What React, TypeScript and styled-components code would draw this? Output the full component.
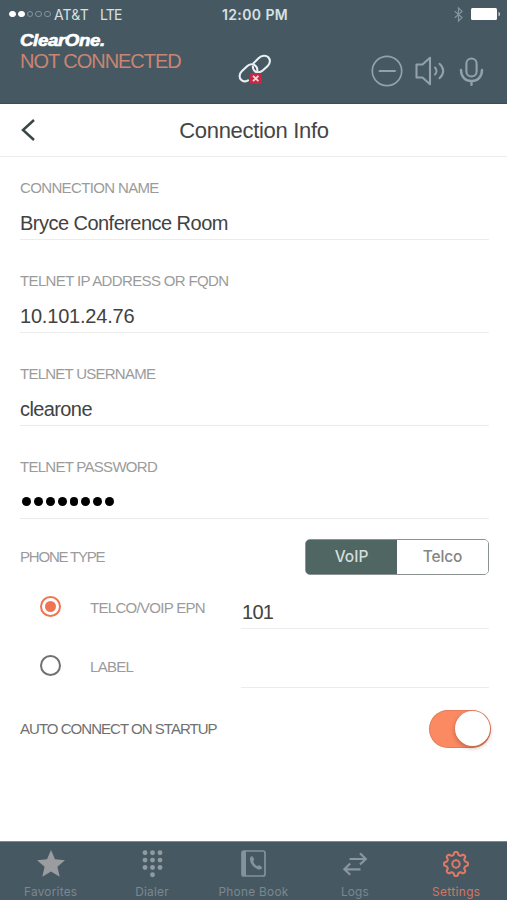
import React, { useState } from 'react';
import styled, { createGlobalStyle } from 'styled-components';

const slate = '#465962';
const coral = '#ef7552';
const muted = '#93a1a8';

const GlobalStyle = createGlobalStyle`
  * { box-sizing: border-box; }
  body { margin: 0; background: #fff; font-family: "Liberation Sans", Arial, sans-serif; }
  button { font: inherit; border: 0; padding: 0; background: none; }
  svg { display: block; overflow: visible; }
`;

const Screen = styled.div`
  width: 507px;
  height: 900px;
  display: flex;
  flex-direction: column;
  background: #fff;
  overflow: hidden;
`;

const Header = styled.header`
  height: 104px;
  flex: none;
  background: ${slate};
  border-bottom: 1px solid #3d4d57;
`;

const StatusBar = styled.div`
  display: grid;
  grid-template-columns: 1fr auto 1fr;
  align-items: center;
  height: 28px;
  padding: 0 6px 0 9px;
  font-family: Inter, sans-serif;
  color: #d9e0e3;
  white-space: pre;
`;

const Carrier = styled.div`
  display: flex;
  align-items: center;
  font-size: 14px;
  letter-spacing: 0.15px;
`;

const Signal = styled.div`
  display: flex;
  gap: 2px;
  margin-right: 3px;
`;

const SignalDot = styled.i<{ $on: boolean }>`
  width: 6.8px;
  height: 6.8px;
  border-radius: 50%;
  border: 1px solid ${p => (p.$on ? '#fff' : '#82939b')};
  background: ${p => (p.$on ? '#fff' : 'transparent')};
`;

const Network = styled.span`
  margin-left: 11px;
  letter-spacing: -0.8px;
`;

const Clock = styled.div`
  font-size: 14px;
  font-weight: 600;
  letter-spacing: 0.4px;
  padding-left: 0;
`;

const StatusIcons = styled.div`
  display: flex;
  justify-content: flex-end;
  align-items: center;
  gap: 7px;
`;

const HeaderMain = styled.div`
  display: grid;
  grid-template-columns: 218px 180px 1fr;
  padding: 4px 0 0 20px;
`;

const Brand = styled.div`
  font-size: 16px;
  font-weight: 700;
  font-style: italic;
  line-height: 18px;
  letter-spacing: -0.35px;
  color: #fff;
  -webkit-text-stroke: 0.6px #fff;
  transform: scaleX(1.17);
  transform-origin: left;
`;

const ConnectionState = styled.div`
  font-size: 20px;
  line-height: 22px;
  letter-spacing: -1.03px;
  color: #cb8471;
  white-space: nowrap;
`;

const LinkStatus = styled.div`
  padding: 22px 0 0 0;
`;

const AudioControls = styled.div`
  display: flex;
  align-items: center;
  gap: 12px;
  height: 34px;
  margin: 22px 0 0 -47px;
`;

const TitleBar = styled.div`
  display: grid;
  grid-template-columns: 60px 1fr 60px;
  align-items: center;
  height: 53px;
  flex: none;
  border-bottom: 1px solid #ececec;
`;

const BackButton = styled.button`
  padding-left: 21px;
`;

const Title = styled.h1`
  margin: 1px 0 0 1px;
  text-align: center;
  font-size: 22px;
  font-weight: 400;
  letter-spacing: -0.3px;
  color: #454545;
`;

const Form = styled.main`
  flex: 1;
  padding: 21px 18px 0 20px;
`;

const Fields = styled.div`
  display: flex;
  flex-direction: column;
  gap: 31px;
`;

const Field = styled.div`
  display: flex;
  flex-direction: column;
  gap: 9px;
  border-bottom: 1px solid #ececec;
`;

const Label = styled.span<{ $spacing?: number; $dark?: boolean }>`
  font-size: 15px;
  line-height: 20px;
  letter-spacing: ${p => p.$spacing ?? -0.9}px;
  color: ${p => (p.$dark ? '#707070' : '#9b9b9b')};
  white-space: nowrap;
`;

const Value = styled.span<{ $spacing?: number }>`
  display: flex;
  align-items: center;
  height: 32px;
  font-size: 20px;
  letter-spacing: ${p => p.$spacing ?? -0.55}px;
  color: #424242;
`;

const PasswordDots = styled.span`
  display: flex;
  gap: 3px;
  padding: 0 0 1px 2px;
`;

const PasswordDot = styled.i`
  width: 8.9px;
  height: 8.9px;
  border-radius: 50%;
  background: #000;
`;

const PhoneType = styled.div`
  display: flex;
  justify-content: space-between;
  align-items: center;
  height: 35px;
  margin-top: 20px;
`;

const Segmented = styled.div`
  display: flex;
  width: 184px;
  height: 36px;
  border: 1.5px solid #8b9291;
  border-radius: 5px;
  overflow: hidden;
`;

const Segment = styled.button<{ $active: boolean }>`
  flex: 1;
  font-family: Inter, sans-serif;
  font-size: 15.5px;
  font-weight: 500;
  letter-spacing: ${p => (p.$active ? 0 : -0.15)}px;
  color: ${p => (p.$active ? '#d3dedc' : '#858585')};
  background: ${p => (p.$active ? '#506663' : '#fff')};
  box-shadow: ${p => (p.$active ? '0 0 0 1.5px #506663' : 'none')};
`;

const OptionRow = styled.div<{ $height: number }>`
  display: grid;
  grid-template-columns: 70px 151px 1fr;
  align-items: end;
  height: ${p => p.$height}px;
`;

const Radio = styled.button<{ $on: boolean }>`
  display: flex;
  align-items: center;
  justify-content: center;
  width: 21px;
  height: 21px;
  margin: 0 0 12px 20px;
  border: 2px solid ${p => (p.$on ? coral : '#707070')};
  border-radius: 50%;
  &::after {
    content: "";
    width: 11px;
    height: 11px;
    border-radius: 50%;
    background: ${p => (p.$on ? coral : 'transparent')};
  }
`;

const OptionLabel = styled(Label)`
  margin-bottom: 11px;
`;

const OptionValue = styled(Value)`
  height: 33px;
  padding-left: 1px;
  border-bottom: 1px solid #ececec;
`;

const AutoConnect = styled.div`
  display: flex;
  align-items: center;
  justify-content: space-between;
  height: 39px;
  margin: 21px -2px 0 0;
`;

const Toggle = styled.button<{ $on: boolean }>`
  display: flex;
  justify-content: ${p => (p.$on ? 'flex-end' : 'flex-start')};
  width: 62px;
  height: 38px;
  padding: 1.5px;
  border-radius: 19px;
  background: ${p => (p.$on ? '#fb8962' : '#ddd')};
  box-shadow: inset 0 0 0 1px rgba(190, 110, 90, 0.4);
`;

const Knob = styled.i`
  width: 35px;
  height: 35px;
  border-radius: 50%;
  background: #fff;
  box-shadow: 0 2px 4px rgba(80, 30, 10, 0.35);
`;

const TabBar = styled.nav`
  display: grid;
  grid-template-columns: repeat(5, 1fr);
  height: 59px;
  flex: none;
  background: ${slate};
  border-top: 1px solid #7d878c;
`;

const Tab = styled.button<{ $active: boolean }>`
  display: flex;
  flex-direction: column;
  align-items: center;
  font-family: Inter, sans-serif;
  font-size: 11.8px;
  color: ${p => (p.$active ? '#d67562' : '#7c878f')};
`;

const TabIcon = styled.span`
  display: flex;
  align-items: center;
  height: 43px;
  color: inherit;
`;

const TabText = styled.span<{ $spacing: number }>`
  line-height: 14px;
  letter-spacing: ${p => p.$spacing}px;
  white-space: nowrap;
`;

const Bluetooth = () => (
  <svg width="9" height="15" viewBox="0 0 9 15" fill="none" stroke="#86959c" strokeWidth="1.2">
    <path d="M.8 4.2 8 10.6 4.5 14V1L8 4.4.8 10.8" />
  </svg>
);

const Battery = () => (
  <svg width="31" height="13" viewBox="0 0 31 13">
    <rect x="1" y="0" width="26" height="12" rx="1.5" fill="#fff" />
    <path d="M28.5 3.7c2 .8 2 3.8 0 4.6z" fill="#cbd3d7" />
  </svg>
);

const BrokenLink = () => (
  <svg width="34" height="32" viewBox="0 0 34 32" fill="none">
    <g stroke="#e8f0f3" strokeWidth="2.1" strokeLinecap="round" strokeLinejoin="round">
      <path d="M15.500 9.300 20.800 4.100c3-3 7.300-3 9.500-.8s2.100 6-.6 8.600l-5 4.700c-2.600 2.400-6.300 2.300-8.300.2-1.200-1.300-1.600-2.700-1.500-4.300" />
      <path d="M19.300 16.900c.3-2-.4-4-2-5.300-2.200-1.900-5.800-1.700-8.200.6l-5.300 5.100c-2.700 2.700-2.800 6.400-.7 8.500 1.800 1.800 4.600 1.900 6.900.5" />
    </g>
    <rect x="12" y="19" width="11.500" height="11" rx="1.5" fill="#c92844" />
    <path d="m15 21.800 5.400 5.400m0-5.400-5.400 5.400" stroke="#f5d8de" strokeWidth="1.8" />
  </svg>
);

const MinusCircle = () => (
  <svg width="32" height="32" viewBox="0 0 32 32" fill="none" stroke={muted} strokeWidth="1.7" strokeLinecap="round">
    <circle cx="16" cy="16" r="14.7" />
    <path d="M8.500 16h15.500" strokeWidth="2" />
  </svg>
);

const Speaker = () => (
  <svg width="32" height="30" viewBox="0 0 32 30" fill="none" stroke={muted} strokeWidth="2.1" strokeLinejoin="round" strokeLinecap="round">
    <path d="M1.500 8.500h6L15 1.800v26.400l-7.500-6.700h-6z" />
    <path d="M20 11.500c1.900 2 1.900 5 0 7M24.500 7.800c4.900 4.100 4.900 10.300 0 14.400" />
  </svg>
);

const Microphone = () => (
  <svg width="25" height="29" viewBox="0 0 24 29" fill="none" stroke={muted} strokeWidth="2.1" strokeLinecap="round">
    <rect x="6.900" y="1.500" width="10.200" height="18" rx="5.100" />
    <path d="M1.500 13c0 6.800 4.300 11 10.500 11s10.500-4.200 10.500-11M12 24v3.800" strokeWidth="2.400" />
  </svg>
);

const Star = () => (
  <svg width="28" height="27" viewBox="0 0 28 27" fill="#9a9ca0">
    <path d="m14 0 4 9.300 10 .9-7.600 6.600 2.300 10-8.700-5.200-8.700 5.200 2.300-10L0 10.200l10-.9z" />
  </svg>
);

const DialPad = () => (
  <svg width="21" height="27" viewBox="0 0 21 27" fill="#8f9ba1">
    {[0, 1, 2].flatMap(r => [0, 1, 2].map(c => (
      <circle key={`${r}-${c}`} cx={3 + c * 7.5} cy={2.7 + r * 7.4} r="2.45" />
    )))}
    <circle cx="10.5" cy="24.7" r="2.45" />
  </svg>
);

const PhoneBook = () => (
  <svg width="25" height="27" viewBox="0 0 25 27" fill="none">
    <rect x="1" y="1" width="23" height="25" rx="2" stroke="#83939c" strokeWidth="1.7" />
    <path d="M1 1h4v25H1z" fill="#83939c" />
    <path d="M9.500 6.900c.7-.8 1.700-.9 2.300-.2l1.300 2.300c.3.800-.1 1.300-.9 2 .6 2.600 2 4.200 4.500 5.100.8-.8 1.400-1.100 2.100-.6l1.900 1.600c.6.600.4 1.400-.5 2-1.500 1-4.100.3-6.500-1.600-3.700-2.900-5.700-7.700-4.200-10.600" fill="#83939c" />
  </svg>
);

const Transfer = () => (
  <svg width="24" height="24" viewBox="0 0 24 24" fill="none" stroke="#89979e" strokeWidth="2.2">
    <path d="M6.500 7h16M17 1.200 22.800 7 17 12.500M17.500 17.300h-16M7.200 11.500l-5.800 5.800 5.800 5.500" />
  </svg>
);

const gearPath = (() => {
  const points: string[] = [];
  for (let i = 0; i <= 160; i++) {
    const a = (i / 160) * Math.PI * 2;
    const r = 10.6 + 1.4 * Math.tanh(2 * Math.cos(8 * a));
    points.push(`${(13 + r * Math.sin(a)).toFixed(2)} ${(13 - r * Math.cos(a)).toFixed(2)}`);
  }
  return `M${points.join('L')}Z`;
})();

const Gear = () => (
  <svg width="26" height="26" viewBox="0 0 26 26" fill="none" stroke="#df7866" strokeWidth="2.1" strokeLinejoin="round">
    <path d={gearPath} />
    <circle cx="13" cy="13" r="3.7" />
  </svg>
);

const fields = [
  { label: 'CONNECTION NAME', value: 'Bryce Conference Room', ls: -0.64, vs: -0.53 },
  { label: 'TELNET IP ADDRESS OR FQDN', value: '10.101.24.76', ls: -0.64, vs: -0.2 },
  { label: 'TELNET USERNAME', value: 'clearone', ls: -0.75, vs: -0.6 },
];

const tabs = [
  { name: 'Favorites', Icon: Star, spacing: 0.25 },
  { name: 'Dialer', Icon: DialPad, spacing: 0.25 },
  { name: 'Phone Book', Icon: PhoneBook, spacing: 0.3 },
  { name: 'Logs', Icon: Transfer, spacing: 0.2 },
  { name: 'Settings', Icon: Gear, spacing: 0.4 },
];

export default function App() {
  const [phone, setPhone] = useState('VoIP');
  const [option, setOption] = useState('epn');
  const [auto, setAuto] = useState(true);
  const [tab, setTab] = useState('Settings');

  return (
    <Screen>
      <GlobalStyle />
      <Header>
        <StatusBar>
          <Carrier>
            <Signal>{[0, 1, 2, 3, 4].map(i => <SignalDot key={i} $on={i < 2} />)}</Signal>
            AT&amp;T<Network>LTE</Network>
          </Carrier>
          <Clock>12:00 PM</Clock>
          <StatusIcons><Bluetooth /><Battery /></StatusIcons>
        </StatusBar>
        <HeaderMain>
          <div>
            <Brand>ClearOne.</Brand>
            <ConnectionState>NOT CONNECTED</ConnectionState>
          </div>
          <LinkStatus><BrokenLink /></LinkStatus>
          <AudioControls><MinusCircle /><Speaker /><Microphone /></AudioControls>
        </HeaderMain>
      </Header>
      <TitleBar>
        <BackButton aria-label="Back">
          <svg width="14" height="22" viewBox="0 0 14 22" fill="none" stroke="#394547" strokeWidth="2.500">
            <path d="M13 1 2 11l11 10" />
          </svg>
        </BackButton>
        <Title>Connection Info</Title>
      </TitleBar>
      <Form>
        <Fields>
          {fields.map(f => (
            <Field key={f.label}>
              <Label $spacing={f.ls}>{f.label}</Label>
              <Value $spacing={f.vs}>{f.value}</Value>
            </Field>
          ))}
          <Field>
            <Label $spacing={-0.72}>TELNET PASSWORD</Label>
            <Value>
              <PasswordDots>{Array.from({ length: 8 }, (_, i) => <PasswordDot key={i} />)}</PasswordDots>
            </Value>
          </Field>
        </Fields>
        <PhoneType>
          <Label $spacing={-1.2}>PHONE TYPE</Label>
          <Segmented>
            {['VoIP', 'Telco'].map(p => (
              <Segment key={p} $active={phone === p} onClick={() => setPhone(p)}>{p}</Segment>
            ))}
          </Segmented>
        </PhoneType>
        <OptionRow $height={55}>
          <Radio $on={option === 'epn'} onClick={() => setOption('epn')} aria-label="Telco/VoIP EPN" />
          <OptionLabel $spacing={-0.7}>TELCO/VOIP EPN</OptionLabel>
          <OptionValue $spacing={-0.7}>101</OptionValue>
        </OptionRow>
        <OptionRow $height={59}>
          <Radio $on={option === 'label'} onClick={() => setOption('label')} aria-label="Label" />
          <OptionLabel $spacing={-0.7}>LABEL</OptionLabel>
          <OptionValue />
        </OptionRow>
        <AutoConnect>
          <Label $dark $spacing={-0.97}>AUTO CONNECT ON STARTUP</Label>
          <Toggle $on={auto} onClick={() => setAuto(!auto)} aria-label="Auto connect"><Knob /></Toggle>
        </AutoConnect>
      </Form>
      <TabBar>
        {tabs.map(({ name, Icon, spacing }) => (
          <Tab key={name} $active={tab === name} onClick={() => setTab(name)}>
            <TabIcon><Icon /></TabIcon>
            <TabText $spacing={spacing}>{name}</TabText>
          </Tab>
        ))}
      </TabBar>
    </Screen>
  );
}
